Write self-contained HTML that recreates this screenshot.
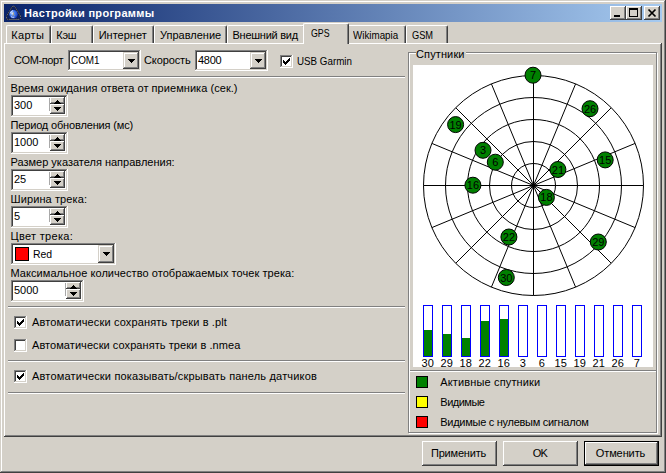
<!DOCTYPE html>
<html lang="ru">
<head>
<meta charset="utf-8">
<title>Настройки программы</title>
<style>
html,body{margin:0;padding:0;background:#d4d0c8;}
body{width:666px;height:473px;overflow:hidden;position:relative;font-family:"Liberation Sans","DejaVu Sans",sans-serif;font-size:11px;color:#000;}
#win{position:absolute;left:0;top:0;width:666px;height:473px;background:#d4d0c8;box-sizing:border-box;
 box-shadow:inset -1px -1px 0 #404040, inset 1px 1px 0 #d4d0c8, inset -2px -2px 0 #808080, inset 2px 2px 0 #fff;}
.abs{position:absolute;}
.t{position:absolute;white-space:nowrap;line-height:13px;height:13px;transform-origin:0 50%;}
.tab span{transform-origin:0 50%;}
#title{position:absolute;left:4px;top:4px;width:658px;height:18px;background:linear-gradient(to right,#0a246a,#a6caf0);}
#title .cap{position:absolute;left:20px;top:2px;color:#fff;font-weight:bold;font-size:11px;line-height:14px;white-space:nowrap;letter-spacing:0.33px;}
.cbtn{position:absolute;top:2px;width:16px;height:14px;background:#d4d0c8;box-sizing:border-box;
 box-shadow:inset -1px -1px 0 #404040, inset 1px 1px 0 #fff, inset -2px -2px 0 #808080, inset 2px 2px 0 #d4d0c8;}
.raised{background:#d4d0c8;box-sizing:border-box;
 box-shadow:inset -1px -1px 0 #404040, inset 1px 1px 0 #fff, inset -2px -2px 0 #808080, inset 2px 2px 0 #d4d0c8;}
.sunken{background:#fff;box-sizing:border-box;
 box-shadow:inset -1px -1px 0 #fff, inset 1px 1px 0 #808080, inset -2px -2px 0 #d4d0c8, inset 2px 2px 0 #404040;}
.tab{position:absolute;top:25px;height:18px;box-sizing:border-box;background:#d4d0c8;
 border-top:1px solid #fff;border-left:1px solid #fff;border-right:1px solid #404040;border-radius:2px 2px 0 0;
 box-shadow:inset -1px 0 0 #808080;}
.tab span{position:absolute;top:3px;white-space:nowrap;line-height:13px;}
.tab.sel{top:23px;height:21px;z-index:3;}
.tab.sel span{top:3px;}
#pane{position:absolute;left:4px;top:43px;width:658px;height:394px;box-sizing:border-box;background:#d4d0c8;
 box-shadow:inset -1px -1px 0 #404040, inset 1px 1px 0 #fff, inset -2px -2px 0 #808080;}
.sep{position:absolute;height:2px;box-sizing:border-box;border-top:1px solid #808080;border-bottom:1px solid #fff;}
.ddb{position:absolute;width:16px;box-sizing:border-box;background:#d4d0c8;
 box-shadow:inset -1px -1px 0 #404040, inset 1px 1px 0 #d4d0c8, inset -2px -2px 0 #808080, inset 2px 2px 0 #fff;}
.arrd{position:absolute;width:0;height:0;border-left:4px solid transparent;border-right:4px solid transparent;border-top:4px solid #000;}
.arru{position:absolute;width:0;height:0;border-left:4px solid transparent;border-right:4px solid transparent;border-bottom:4px solid #000;}
.spb{position:absolute;width:15px;box-sizing:border-box;background:#d4d0c8;
 box-shadow:inset -1px -1px 0 #404040, inset 1px 1px 0 #fff, inset -2px -2px 0 #808080;}
.chk{position:absolute;width:13px;height:13px;}
.chk svg{position:absolute;left:0;top:0;}
.btn{position:absolute;top:441px;width:75px;height:25px;text-align:center;line-height:24px;}
.sw{position:absolute;left:416px;width:12px;height:12px;box-sizing:border-box;border:1px solid #000;}
</style>
</head>
<body>
<div id="win">

<!-- title bar -->
<div id="title">
 <svg class="abs" style="left:2px;top:1px" width="16" height="16" viewBox="0 0 16 16">
  <defs><radialGradient id="gl" cx="0.35" cy="0.4" r="0.75"><stop offset="0" stop-color="#dfeaff"/><stop offset="0.35" stop-color="#4d86f0"/><stop offset="1" stop-color="#0a2fb8"/></radialGradient></defs>
  <path d="M7.5 1.2 Q8.6 1.2 9.4 2.6 L14.2 10.6 Q15.6 14.4 12.6 14.4 L2.4 14.4 Q-0.6 14.4 0.8 10.6 L5.6 2.6 Q6.4 1.2 7.5 1.2 Z" fill="#0c2263" stroke="#0a0a14" stroke-width="1.1"/>
  <path d="M7.5 1.2 Q8.6 1.2 9.4 2.6 L14.2 10.6 Q15.6 14.4 12.6 14.4 L2.4 14.4 Q-0.6 14.4 0.8 10.6 L5.6 2.6 Q6.4 1.2 7.5 1.2 Z" fill="none" stroke="#b4b8c4" stroke-width="1" stroke-dasharray="1 1.3"/>
  <path d="M2.6 14.5 H12.4" stroke="#555b66" stroke-width="1"/>
  <circle cx="7.5" cy="9.2" r="4.2" fill="url(#gl)"/>
  <path d="M4.3 8.2 Q5.2 6 7 5.6 M5 11.6 Q6.4 12.8 8.4 12.2" stroke="#fff" stroke-width="0.9" fill="none" opacity="0.85"/>
  <path d="M7.5 7.4 L7.5 9.6 M6.3 10.8 L7.5 9.6 L8.7 10.8" stroke="#c8a860" stroke-width="0.7" fill="none"/>
 </svg>
 <div class="cap">Настройки программы</div>
 <div class="cbtn" style="left:606px"><div class="abs" style="left:4px;top:9px;width:6px;height:2px;background:#000"></div></div>
 <div class="cbtn" style="left:622px"><div class="abs" style="left:3px;top:2px;width:9px;height:9px;box-sizing:border-box;border:1px solid #000;border-top-width:2px"></div></div>
 <div class="cbtn" style="left:640px">
  <svg class="abs" style="left:0;top:0" width="16" height="14" viewBox="0 0 16 14"><path d="M4.5 3.5 L11.5 10.5 M11.5 3.5 L4.5 10.5" stroke="#000" stroke-width="1.7" fill="none"/></svg>
 </div>
</div>

<!-- tab pane -->
<div id="pane"></div>

<!-- tabs -->
<div class="tab" style="left:6px;width:45px"><span style="left:4.3px;letter-spacing:0.3px">Карты</span></div>
<div class="tab" style="left:51px;width:42px"><span style="left:4.3px;letter-spacing:-0.3px">Кэш</span></div>
<div class="tab" style="left:93px;width:61px"><span style="left:4.7px">Интернет</span></div>
<div class="tab" style="left:154px;width:73px"><span style="left:5px">Управление</span></div>
<div class="tab" style="left:227px;width:78px"><span style="left:4.5px;letter-spacing:-0.25px">Внешний вид</span></div>
<div class="tab" style="left:347px;width:59px"><span style="left:5px;transform:scaleX(.89)">Wikimapia</span></div>
<div class="tab" style="left:406px;width:42px"><span style="left:4.5px;transform:scaleX(.84)">GSM</span></div>
<div class="tab sel" style="left:303px;width:46px"><span style="left:7px;transform:scaleX(.8)">GPS</span></div>

<!-- row 1 -->
<div class="t" style="left:14px;top:54px;letter-spacing:-0.4px">COM-порт</div>
<div class="abs sunken" style="left:68px;top:50px;width:73px;height:21px">
 <div class="t" style="left:3px;top:4px;transform:scaleX(.9)">COM1</div>
 <div class="ddb" style="left:55px;top:2px;height:17px"><svg class="abs" style="left:5px;top:7px" width="7" height="4" viewBox="0 0 7 4" shape-rendering="crispEdges"><path d="M0 0h7v1H6v1H5v1H4v1H3V3H2V2H1V1H0z" fill="#000"/></svg></div>
</div>
<div class="t" style="left:144px;top:54px;letter-spacing:-0.12px">Скорость</div>
<div class="abs sunken" style="left:195px;top:50px;width:73px;height:21px">
 <div class="t" style="left:3px;top:4px;letter-spacing:-0.3px">4800</div>
 <div class="ddb" style="left:55px;top:2px;height:17px"><svg class="abs" style="left:5px;top:7px" width="7" height="4" viewBox="0 0 7 4" shape-rendering="crispEdges"><path d="M0 0h7v1H6v1H5v1H4v1H3V3H2V2H1V1H0z" fill="#000"/></svg></div>
</div>
<div class="chk sunken" style="left:280px;top:55px"><svg width="13" height="13" viewBox="0 0 13 13" shape-rendering="crispEdges"><path d="M3 5 L3 8 L5 10 L10 5 L10 2 L5 7 Z" fill="#000"/></svg></div>
<div class="t" style="left:297.2px;top:55px;transform:scaleX(.89)">USB Garmin</div>
<div class="sep" style="left:8px;top:76px;width:397px"></div>

<!-- spin groups -->
<div class="t" style="left:10.5px;top:82px;letter-spacing:0.05px">Время ожидания ответа от приемника (сек.)</div>
<div class="abs sunken" style="left:11px;top:95px;width:57px;height:22px">
 <div class="t" style="left:3px;top:4px">300</div>
 <div class="abs" style="left:38px;top:3px;width:1px;height:13px;background:#a8a8a8"></div>
 <div class="spb" style="left:39px;top:2px;height:7px"><svg class="abs" style="left:4px;top:3px" width="7" height="4" viewBox="0 0 7 4" shape-rendering="crispEdges"><path d="M3 0h1v1h1v1h1v1h1v1H0V3h1V2h1V1h1z" fill="#000"/></svg></div>
 <div class="spb" style="left:39px;top:9px;height:10px"><svg class="abs" style="left:4px;top:3px" width="7" height="4" viewBox="0 0 7 4" shape-rendering="crispEdges"><path d="M0 0h7v1H6v1H5v1H4v1H3V3H2V2H1V1H0z" fill="#000"/></svg></div>
</div>

<div class="t" style="left:10.5px;top:119px;letter-spacing:-0.16px">Период обновления (мс)</div>
<div class="abs sunken" style="left:11px;top:132px;width:57px;height:22px">
 <div class="t" style="left:3px;top:4px">1000</div>
 <div class="abs" style="left:38px;top:3px;width:1px;height:13px;background:#a8a8a8"></div>
 <div class="spb" style="left:39px;top:2px;height:7px"><svg class="abs" style="left:4px;top:3px" width="7" height="4" viewBox="0 0 7 4" shape-rendering="crispEdges"><path d="M3 0h1v1h1v1h1v1h1v1H0V3h1V2h1V1h1z" fill="#000"/></svg></div>
 <div class="spb" style="left:39px;top:9px;height:10px"><svg class="abs" style="left:4px;top:3px" width="7" height="4" viewBox="0 0 7 4" shape-rendering="crispEdges"><path d="M0 0h7v1H6v1H5v1H4v1H3V3H2V2H1V1H0z" fill="#000"/></svg></div>
</div>

<div class="t" style="left:10.5px;top:156px">Размер указателя направления:</div>
<div class="abs sunken" style="left:11px;top:169px;width:57px;height:22px">
 <div class="t" style="left:3px;top:4px">25</div>
 <div class="abs" style="left:38px;top:3px;width:1px;height:13px;background:#a8a8a8"></div>
 <div class="spb" style="left:39px;top:2px;height:7px"><svg class="abs" style="left:4px;top:3px" width="7" height="4" viewBox="0 0 7 4" shape-rendering="crispEdges"><path d="M3 0h1v1h1v1h1v1h1v1H0V3h1V2h1V1h1z" fill="#000"/></svg></div>
 <div class="spb" style="left:39px;top:9px;height:10px"><svg class="abs" style="left:4px;top:3px" width="7" height="4" viewBox="0 0 7 4" shape-rendering="crispEdges"><path d="M0 0h7v1H6v1H5v1H4v1H3V3H2V2H1V1H0z" fill="#000"/></svg></div>
</div>

<div class="t" style="left:10.5px;top:193px;letter-spacing:0.1px">Ширина трека:</div>
<div class="abs sunken" style="left:11px;top:206px;width:57px;height:22px">
 <div class="t" style="left:3px;top:4px">5</div>
 <div class="abs" style="left:38px;top:3px;width:1px;height:13px;background:#a8a8a8"></div>
 <div class="spb" style="left:39px;top:2px;height:7px"><svg class="abs" style="left:4px;top:3px" width="7" height="4" viewBox="0 0 7 4" shape-rendering="crispEdges"><path d="M3 0h1v1h1v1h1v1h1v1H0V3h1V2h1V1h1z" fill="#000"/></svg></div>
 <div class="spb" style="left:39px;top:9px;height:10px"><svg class="abs" style="left:4px;top:3px" width="7" height="4" viewBox="0 0 7 4" shape-rendering="crispEdges"><path d="M0 0h7v1H6v1H5v1H4v1H3V3H2V2H1V1H0z" fill="#000"/></svg></div>
</div>

<div class="t" style="left:10.5px;top:230px;letter-spacing:0.3px">Цвет трека:</div>
<div class="abs sunken" style="left:11px;top:243px;width:105px;height:22px">
 <div class="abs" style="left:4px;top:4px;width:14px;height:14px;box-sizing:border-box;border:1px solid #000;background:#f00"></div>
 <div class="t" style="left:22px;top:5px;transform:scaleX(.95)">Red</div>
 <div class="ddb" style="left:87px;top:2px;height:18px"><svg class="abs" style="left:5px;top:7px" width="7" height="4" viewBox="0 0 7 4" shape-rendering="crispEdges"><path d="M0 0h7v1H6v1H5v1H4v1H3V3H2V2H1V1H0z" fill="#000"/></svg></div>
</div>

<div class="t" style="left:10.5px;top:267px;letter-spacing:0.06px">Максимальное количество отображаемых точек трека:</div>
<div class="abs sunken" style="left:11px;top:280px;width:73px;height:22px">
 <div class="t" style="left:3px;top:4px">5000</div>
 <div class="abs" style="left:54px;top:3px;width:1px;height:13px;background:#a8a8a8"></div>
 <div class="spb" style="left:55px;top:2px;height:7px"><svg class="abs" style="left:4px;top:3px" width="7" height="4" viewBox="0 0 7 4" shape-rendering="crispEdges"><path d="M3 0h1v1h1v1h1v1h1v1H0V3h1V2h1V1h1z" fill="#000"/></svg></div>
 <div class="spb" style="left:55px;top:9px;height:10px"><svg class="abs" style="left:4px;top:3px" width="7" height="4" viewBox="0 0 7 4" shape-rendering="crispEdges"><path d="M0 0h7v1H6v1H5v1H4v1H3V3H2V2H1V1H0z" fill="#000"/></svg></div>
</div>

<div class="sep" style="left:8px;top:306px;width:397px"></div>

<div class="chk sunken" style="left:14px;top:316px"><svg width="13" height="13" viewBox="0 0 13 13" shape-rendering="crispEdges"><path d="M3 5 L3 8 L5 10 L10 5 L10 2 L5 7 Z" fill="#000"/></svg></div>
<div class="t" style="left:32px;top:316px;letter-spacing:0.14px">Автоматически сохранять треки в .plt</div>
<div class="chk sunken" style="left:14px;top:339px"></div>
<div class="t" style="left:32px;top:339px;letter-spacing:0.065px">Автоматически сохранять треки в .nmea</div>
<div class="sep" style="left:8px;top:360px;width:397px"></div>
<div class="chk sunken" style="left:14px;top:370px"><svg width="13" height="13" viewBox="0 0 13 13" shape-rendering="crispEdges"><path d="M3 5 L3 8 L5 10 L10 5 L10 2 L5 7 Z" fill="#000"/></svg></div>
<div class="t" style="left:32px;top:370px;letter-spacing:0.175px">Автоматически показывать/скрывать панель датчиков</div>
<div class="sep" style="left:8px;top:392px;width:397px"></div>

<!-- group box -->
<div class="abs" style="left:408px;top:52px;width:249px;height:381px;box-sizing:border-box;border:1px solid #808080;box-shadow:inset 1px 1px 0 #fff, 1px 1px 0 #fff;"></div>
<div class="t" style="left:415.5px;top:48px;background:#d4d0c8;padding:0 1px 0 0.5px;letter-spacing:0.12px">Спутники</div>
<div class="abs" style="left:413px;top:65px;width:240px;height:302px;background:#fff"></div>
<div class="sep" style="left:410px;top:370px;width:246px"></div>

<!-- sky plot -->
<svg class="abs" style="left:412px;top:64px" width="242" height="304" viewBox="412 64 242 304" font-family='"Liberation Sans","DejaVu Sans",sans-serif' font-size="11">
<g fill="none" stroke="#000" stroke-width="1">
<circle cx="533.5" cy="185.5" r="22"/>
<circle cx="533.5" cy="185.5" r="44"/>
<circle cx="533.5" cy="185.5" r="66"/>
<circle cx="533.5" cy="185.5" r="88"/>
<circle cx="533.5" cy="185.5" r="110"/>
<line x1="533.50" y1="75.50" x2="533.50" y2="295.50"/>
<line x1="491.40" y1="83.87" x2="575.60" y2="287.13"/>
<line x1="455.72" y1="107.72" x2="611.28" y2="263.28"/>
<line x1="431.87" y1="143.40" x2="635.13" y2="227.60"/>
<line x1="423.50" y1="185.50" x2="643.50" y2="185.50"/>
<line x1="431.87" y1="227.60" x2="635.13" y2="143.40"/>
<line x1="455.72" y1="263.28" x2="611.28" y2="107.72"/>
<line x1="491.40" y1="287.13" x2="575.60" y2="83.87"/>
</g>
<g text-anchor="middle">
<circle cx="533" cy="75.2" r="8" fill="#008000" stroke="#000" stroke-width="1"/><text x="533" y="79.2">7</text>
<circle cx="590" cy="108.7" r="8" fill="#008000" stroke="#000" stroke-width="1"/><text x="590" y="112.7">26</text>
<circle cx="455.6" cy="124.6" r="8" fill="#008000" stroke="#000" stroke-width="1"/><text x="455.6" y="128.6">19</text>
<circle cx="483" cy="150.3" r="8" fill="#008000" stroke="#000" stroke-width="1"/><text x="483" y="154.3">3</text>
<circle cx="495.3" cy="162.2" r="8" fill="#008000" stroke="#000" stroke-width="1"/><text x="495.3" y="166.2">6</text>
<circle cx="557.9" cy="169.5" r="8" fill="#008000" stroke="#000" stroke-width="1"/><text x="557.9" y="173.5">21</text>
<circle cx="605.2" cy="159.9" r="8" fill="#008000" stroke="#000" stroke-width="1"/><text x="605.2" y="163.9">15</text>
<circle cx="472.9" cy="185.2" r="8" fill="#008000" stroke="#000" stroke-width="1"/><text x="472.9" y="189.2">16</text>
<circle cx="546.4" cy="197.4" r="8" fill="#008000" stroke="#000" stroke-width="1"/><text x="546.4" y="201.4">18</text>
<circle cx="508.9" cy="237" r="8" fill="#008000" stroke="#000" stroke-width="1"/><text x="508.9" y="241">22</text>
<circle cx="598.3" cy="242" r="8" fill="#008000" stroke="#000" stroke-width="1"/><text x="598.3" y="246">29</text>
<circle cx="506.3" cy="277.5" r="8" fill="#008000" stroke="#000" stroke-width="1"/><text x="506.3" y="281.5">30</text>
</g>
<g text-anchor="middle">
<rect x="423" y="330" width="10" height="27" fill="#008000"/>
<rect x="423.5" y="305.5" width="9" height="51" fill="none" stroke="#0000ff" stroke-width="1"/>
<text x="427.7" y="367">30</text>
<rect x="442" y="334" width="10" height="23" fill="#008000"/>
<rect x="442.5" y="305.5" width="9" height="51" fill="none" stroke="#0000ff" stroke-width="1"/>
<text x="446.7" y="367">29</text>
<rect x="461" y="338" width="10" height="19" fill="#008000"/>
<rect x="461.5" y="305.5" width="9" height="51" fill="none" stroke="#0000ff" stroke-width="1"/>
<text x="465.7" y="367">18</text>
<rect x="480" y="321" width="10" height="36" fill="#008000"/>
<rect x="480.5" y="305.5" width="9" height="51" fill="none" stroke="#0000ff" stroke-width="1"/>
<text x="484.7" y="367">22</text>
<rect x="499" y="319" width="10" height="38" fill="#008000"/>
<rect x="499.5" y="305.5" width="9" height="51" fill="none" stroke="#0000ff" stroke-width="1"/>
<text x="503.7" y="367">16</text>
<rect x="518.5" y="305.5" width="9" height="51" fill="none" stroke="#0000ff" stroke-width="1"/>
<text x="522.7" y="367">3</text>
<rect x="537.5" y="305.5" width="9" height="51" fill="none" stroke="#0000ff" stroke-width="1"/>
<text x="541.7" y="367">6</text>
<rect x="556.5" y="305.5" width="9" height="51" fill="none" stroke="#0000ff" stroke-width="1"/>
<text x="560.7" y="367">15</text>
<rect x="575.5" y="305.5" width="9" height="51" fill="none" stroke="#0000ff" stroke-width="1"/>
<text x="579.7" y="367">19</text>
<rect x="594.5" y="305.5" width="9" height="51" fill="none" stroke="#0000ff" stroke-width="1"/>
<text x="598.7" y="367">21</text>
<rect x="613.5" y="305.5" width="9" height="51" fill="none" stroke="#0000ff" stroke-width="1"/>
<text x="617.7" y="367">26</text>
<rect x="632.5" y="305.5" width="9" height="51" fill="none" stroke="#0000ff" stroke-width="1"/>
<text x="636.7" y="367">7</text>
</g>
</svg>

<!-- legend -->
<div class="sw" style="top:376px;background:#008000"></div>
<div class="t" style="left:440.3px;top:376px;letter-spacing:0.14px">Активные спутники</div>
<div class="sw" style="top:396px;background:#ffff00"></div>
<div class="t" style="left:440.3px;top:396px;letter-spacing:-0.5px">Видимые</div>
<div class="sw" style="top:416px;background:#ff0000"></div>
<div class="t" style="left:440.3px;top:416px;letter-spacing:-0.28px">Видимые с нулевым сигналом</div>

<!-- buttons -->
<div class="btn raised" style="left:422px;letter-spacing:-0.2px"><span style="position:relative;left:-1px">Применить</span></div>
<div class="btn raised" style="left:503px"><span style="position:relative;left:-0.5px;letter-spacing:-0.6px">OK</span></div>
<div class="btn" style="left:584px;box-sizing:border-box;border:1px solid #000;line-height:22px">
 <div class="abs raised" style="left:0;top:0;width:73px;height:23px"></div><span style="position:relative;left:-1px;letter-spacing:-0.1px">Отменить</span>
</div>

</div>
</body>
</html>
